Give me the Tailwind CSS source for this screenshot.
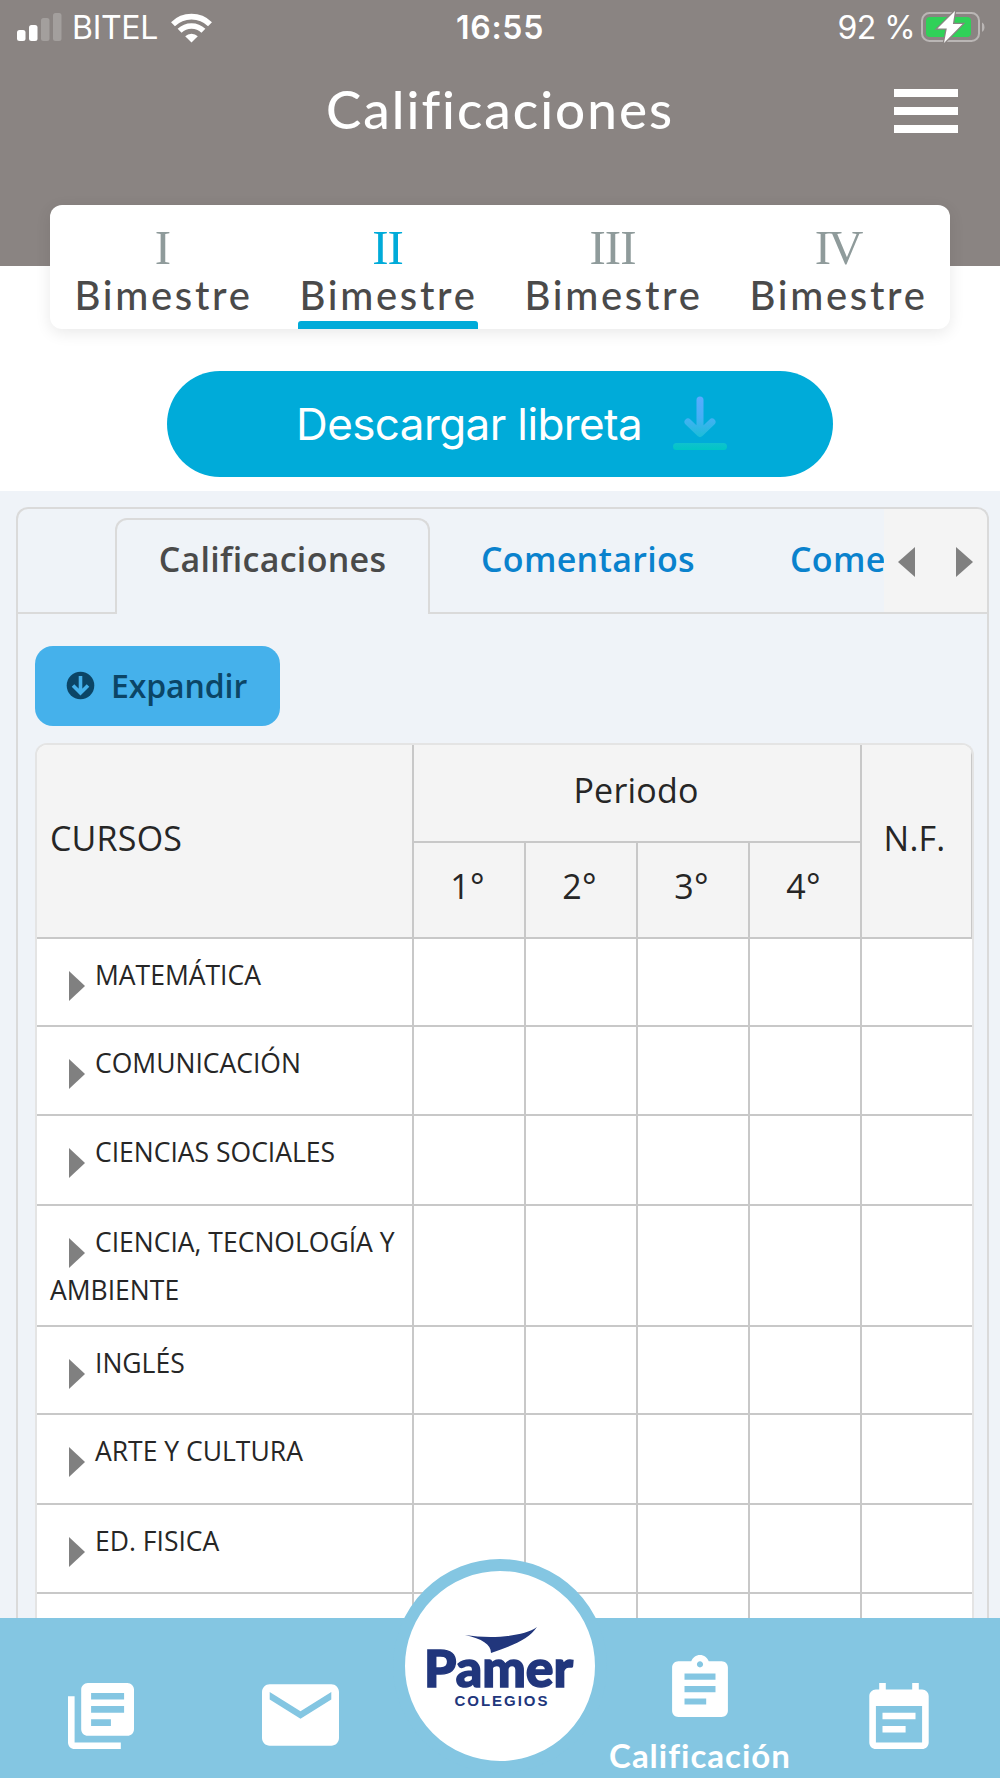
<!DOCTYPE html>
<html lang="es">
<head>
  <meta charset="UTF-8" />
  <title>Calificaciones</title>
  <meta name="viewport" content="width=device-width, initial-scale=1.0" />
  <script src="https://cdn.jsdelivr.net/npm/@tailwindcss/browser@4"></script>
</head>
<body class="bg-white">
  <div id="app" class="relative flex flex-col w-[1000px] h-[1778px] overflow-hidden font-['Open_Sans','Noto_Sans',sans-serif]">

    <header class="shrink-0 h-[266px] bg-[#8a8482] text-white">
      <!-- Status bar -->
      <div class="grid grid-cols-3 items-center h-[54px] pl-[17px] pr-[15px] font-['Inter',sans-serif]">
        <div class="flex items-center">
          <svg class="-mt-[2px] w-[45px] h-[28px]" viewBox="0 0 45 28" fill="#fff">
            <rect x="0" y="17" width="8.5" height="11" rx="2.5" />
            <rect x="12" y="12" width="8.5" height="16" rx="2.5" />
            <rect x="24" y="5" width="8.5" height="23" rx="2.5" opacity=".22" />
            <rect x="36" y="0" width="8.5" height="28" rx="2.5" opacity=".22" />
          </svg>
          <span class="ml-[10px] w-[86px] text-[32px] leading-[56px] tracking-[-0.3px]">BITEL</span>
          <svg class="ml-[13px] w-[41px] h-[30px]" viewBox="0 0 41 30">
            <g fill="none" stroke="#fff" stroke-width="5.6">
              <path d="M2 11.2a26.5 26.5 0 0 1 37 0" />
              <path d="M8.6 17.8a17 17 0 0 1 23.8 0" />
            </g>
            <path d="M20.5 29.5l-6.3-6.3a9 9 0 0 1 12.6 0z" fill="#fff" />
          </svg>
        </div>
        <span class="-ml-[2px] text-center text-[32px] leading-[56px] font-semibold tracking-[0.7px]">16:55</span>
        <div class="flex items-center justify-end">
          <span class="mr-[6px] text-[32px] leading-[56px] tracking-[-0.6px]">92 %</span>
          <svg class="-mt-[2px] w-[64px] h-[32px]" viewBox="0 0 64 32">
            <rect x="1" y="2" width="57" height="28" rx="7.5" fill="none" stroke="#bab6b5" stroke-width="2" />
            <path d="M61 11.5c3.3 1.5 3.3 7.8 0 9.3z" fill="#bab6b5" />
            <rect x="5" y="6" width="45" height="20" rx="4" fill="#30d158" />
            <path d="M34 0L16.5 17.5h9.3L23 32 41.5 13h-9.6z" fill="#fff" stroke="#8a8482" stroke-width="2.5" paint-order="stroke" />
          </svg>
        </div>
      </div>
      <!-- Title -->
      <div class="grid grid-cols-[1fr_auto_1fr] items-center h-[113px] px-[42px]">
        <span></span>
        <h1 class="pb-[3px] text-[53px] leading-[110px] font-['Lato',sans-serif] font-medium tracking-[2px]">Calificaciones</h1>
        <div class="flex flex-col gap-[10px] justify-self-end w-[64px]">
          <span class="h-2 bg-white"></span>
          <span class="h-2 bg-white"></span>
          <span class="h-2 bg-white"></span>
        </div>
      </div>
    </header>

    <!-- Period selector -->
    <nav class="shrink-0 grid grid-cols-4 w-[900px] h-[124px] -mt-[61px] ml-[50px] rounded-xl bg-white shadow-[0_4px_16px_rgba(0,0,0,0.09)] text-center text-[#4a4a4a]">
      <div class="flex flex-col items-center pt-[16px]">
        <span class="h-[50px] text-[49px] leading-[54px] tracking-[-1px] font-['Liberation_Serif',serif] text-[#8f9b9b]">I</span>
        <span class="h-[50px] pl-[2px] text-[40px] leading-[48px] tracking-[2.7px] font-['Lato',sans-serif] font-medium">Bimestre</span>
      </div>
      <div class="flex flex-col items-center pt-[16px]">
        <span class="h-[50px] text-[49px] leading-[54px] tracking-[-1px] font-['Liberation_Serif',serif] text-[#00abd9]">II</span>
        <span class="h-[50px] pl-[2px] text-[40px] leading-[48px] tracking-[2.7px] font-['Lato',sans-serif] font-medium">Bimestre</span>
        <span class="w-[180px] h-2 rounded-t-[3px] bg-[#00abd9]"></span>
      </div>
      <div class="flex flex-col items-center pt-[16px]">
        <span class="h-[50px] text-[49px] leading-[54px] tracking-[-1px] font-['Liberation_Serif',serif] text-[#8f9b9b]">III</span>
        <span class="h-[50px] pl-[2px] text-[40px] leading-[48px] tracking-[2.7px] font-['Lato',sans-serif] font-medium">Bimestre</span>
      </div>
      <div class="flex flex-col items-center pt-[16px]">
        <span class="h-[50px] text-[49px] leading-[54px] tracking-[-3px] font-['Liberation_Serif',serif] text-[#8f9b9b]">IV</span>
        <span class="h-[50px] pl-[2px] text-[40px] leading-[48px] tracking-[2.7px] font-['Lato',sans-serif] font-medium">Bimestre</span>
      </div>
    </nav>

    <button class="shrink-0 flex items-center w-[666px] h-[106px] mt-[42px] mb-[14px] ml-[167px] pl-[129px] rounded-full bg-[#00abd9] text-white font-['Inter',sans-serif]">
      <span class="w-[377px] text-left text-[44px] leading-[106px] tracking-[-0.6px] whitespace-nowrap">Descargar libreta</span>
      <svg class="-mt-[2px] w-[54px] h-[54px]" viewBox="0 0 54 54" fill="none" stroke="url(#down)" stroke-width="7" stroke-linecap="round" stroke-linejoin="round">
        <defs>
          <linearGradient id="down" gradientUnits="userSpaceOnUse" x1="0" y1="0" x2="0" y2="54">
            <stop offset="0" stop-color="#5aaaff" />
            <stop offset=".4" stop-color="#45b0f5" />
            <stop offset="1" stop-color="#00c6c4" />
          </linearGradient>
        </defs>
        <path d="M27 4v33M15 26l12 11.5L39 26M3.5 50.5h47" />
      </svg>
    </button>

    <main class="grow flex flex-col pt-[16px] pr-[11px] pl-[16px] bg-[#eff3f8]">
      <div class="grow flex flex-col border-2 border-b-0 border-[#dadada] rounded-t-xl overflow-hidden">
        <!-- Tabs -->
        <div class="shrink-0 flex h-[105px] border-b-2 border-[#dadada] text-[34px] font-semibold tracking-[0.3px] text-[#0a82cd]">
          <div class="flex w-[866px] overflow-hidden pt-[9px] -mb-[2px] whitespace-nowrap">
            <div class="shrink-0 w-[315px] h-[96px] ml-[97px] border-2 border-b-0 border-[#dadada] rounded-t-xl bg-[#eff3f8] text-[#4a4a4a] text-center leading-[78px]">Calificaciones</div>
            <div class="shrink-0 ml-[51px] w-[309px] leading-[82px]">Comentarios</div>
            <div class="shrink-0 leading-[82px]">Comentarios</div>
          </div>
          <div class="grow flex items-center justify-between px-[14px] pt-[2px] bg-[#f4f4f4]">
            <svg class="w-[17px] h-[30px]" viewBox="0 0 17 30" fill="#808080"><path d="M17 0v30L0 15z" /></svg>
            <svg class="w-[17px] h-[30px]" viewBox="0 0 17 30" fill="#808080"><path d="M0 0v30l17-15z" /></svg>
          </div>
        </div>

        <button class="shrink-0 flex items-center w-[245px] h-[80px] mt-[32px] mb-[17px] ml-[17px] pl-[31px] rounded-[18px] bg-[#45b1eb] text-[#0b4566]">
          <svg class="-mt-[2px] w-[29px] h-[29px]" viewBox="0 0 29 29">
            <circle cx="14.5" cy="14.5" r="13.8" fill="#0b4566" />
            <path d="M14.5 5v17M7 14.5l7.5 7.5 7.5-7.5" fill="none" stroke="#45b1eb" stroke-width="3.6" />
          </svg>
          <span class="ml-[16px] text-[32px] leading-[78px] font-semibold tracking-[-0.1px]">Expandir</span>
        </button>

        <!-- Grades table -->
        <div class="grow w-[939px] h-0 ml-[17px] border-2 border-b-0 border-[#e4e4e4] rounded-t-xl bg-white overflow-hidden text-[#262626]">
          <table class="table-fixed border-separate border-spacing-0 w-[936px] [&_th]:border-r-2 [&_th]:border-b-2 [&_td]:border-r-2 [&_td]:border-b-2 [&_th]:border-[#c8c8c8] [&_td]:border-[#c8c8c8] [&_th]:p-0 [&_td]:p-0 [&_th]:font-normal [&_td]:last:border-r-0">
            <colgroup>
              <col class="w-[377px]" />
              <col class="w-[112px]" />
              <col class="w-[112px]" />
              <col class="w-[112px]" />
              <col class="w-[112px]" />
              <col class="w-[111px]" />
            </colgroup>
            <thead class="bg-[#f4f4f4] text-[34px] leading-[46px] tracking-[0.2px]">
              <tr class="h-[98px]">
                <th rowspan="2" class="text-left"><div class="pl-[13px] pb-[7px]">CURSOS</div></th>
                <th colspan="4"><div class="pr-[2px] pb-[7px]">Periodo</div></th>
                <th rowspan="2"><div class="pr-[4px] pb-[7px]">N.F.</div></th>
              </tr>
              <tr class="h-[96px]">
                <th><div class="pr-[3px] pb-[9px]">1°</div></th>
                <th><div class="pr-[3px] pb-[9px]">2°</div></th>
                <th><div class="pr-[3px] pb-[9px]">3°</div></th>
                <th><div class="pr-[3px] pb-[9px]">4°</div></th>
              </tr>
            </thead>
            <tbody id="courses" class="text-[26.5px] leading-[48px]"></tbody>
          </table>
        </div>
      </div>
    </main>

    <!-- Bottom navigation -->
    <footer class="shrink-0 flex h-[160px] pl-[68px] bg-[#84c6e2] text-white">
      <svg class="mt-[65px] w-[66px] h-[66px]" viewBox="2 2 20 20" fill="currentColor">
        <path d="M4 6H2v14c0 1.1.9 2 2 2h14v-2H4V6zM20 2H8c-1.1 0-2 .9-2 2v12c0 1.1.9 2 2 2h12c1.1 0 2-.9 2-2V4c0-1.1-.9-2-2-2zm-5 13H9v-2h6v2zm4-4H9V9h10v2zm0-4H9V5h10v2z" />
      </svg>
      <svg class="mt-[66px] ml-[128px] w-[77px] h-[62px]" viewBox="2 4 20 16" fill="currentColor">
        <path d="M20 4H4c-1.1 0-2 .9-2 2v12c0 1.1.9 2 2 2h16c1.1 0 2-.9 2-2V6c0-1.1-.9-2-2-2zm0 4l-8 5-8-5V6l8 5 8-5v2z" />
      </svg>
      <div class="flex flex-col items-center ml-[266px] w-[190px] pt-[37px]">
        <svg class="w-[56px] h-[62px]" viewBox="3 1 18 20" fill="currentColor">
          <path d="M19 3h-4.18C14.4 1.84 13.3 1 12 1s-2.4.84-2.82 2H5c-1.1 0-2 .9-2 2v14c0 1.1.9 2 2 2h14c1.1 0 2-.9 2-2V5c0-1.1-.9-2-2-2zm-7 0c.55 0 1 .45 1 1s-.45 1-1 1-1-.45-1-1 .45-1 1-1zm2 14H7v-2h7v2zm3-4H7v-2h10v2zm0-4H7V7h10v2z" />
        </svg>
        <span class="mt-[18px] text-[33px] leading-[40px] tracking-[1px] font-['Lato',sans-serif] font-bold">Calificación</span>
      </div>
      <svg class="mt-[65px] ml-[74px] w-[60px] h-[66px]" viewBox="3 1 18 20" fill="currentColor">
        <path d="M17 10H7v2h10v-2zm2-7h-1V1h-2v2H8V1H6v2H5c-1.11 0-2 .9-2 2v14c0 1.1.89 2 2 2h14c1.1 0 2-.9 2-2V5c0-1.1-.9-2-2-2zm0 16H5V8h14v11zm-5-5H7v2h7v-2z" />
      </svg>
    </footer>

    <!-- School logo over the bar -->
    <div class="absolute left-[393px] top-[1559px] w-[214px] h-[214px] rounded-full border-[12px] border-[#84c6e2] bg-white">
      <svg class="w-[190px] h-[190px]" viewBox="405 1571 190 190" fill="#21367c">
        <path d="M465 1635c25 4 58 2 72-8-8 12-25 19-46 26 0-9-9-14-26-18z" />
        <text x="424" y="1686.5" font-family="Lato" font-weight="900" font-size="52" stroke="#21367c" stroke-width="1.5" textLength="149" lengthAdjust="spacingAndGlyphs">Pamer</text>
        <text x="454.5" y="1705.5" font-family="Liberation Sans" font-weight="700" font-size="15" textLength="93">COLEGIOS</text>
      </svg>
    </div>
  </div>

  <script>
    const courses = [
      ["MATEMÁTICA", 88],
      ["COMUNICACIÓN", 89],
      ["CIENCIAS SOCIALES", 90],
      ["CIENCIA, TECNOLOGÍA Y AMBIENTE", 121],
      ["INGLÉS", 88],
      ["ARTE Y CULTURA", 90],
      ["ED. FISICA", 89],
      ["", 89],
    ];
    document.getElementById("courses").innerHTML = courses.map(([name, height]) => `
      <tr style="height: ${height}px">
        <td class="align-top">
          <div class="pl-[13px] pt-[12px]">
            ${name && '<svg class="inline-block align-top mt-[20px] -mb-[10px] ml-[18.5px] mr-[10.5px] w-[16px] h-[30px]" viewBox="0 0 16 30" fill="#808080"><path d="M0 0v30l16-15z" /></svg>'}${name}
          </div>
        </td>
        <td></td><td></td><td></td><td></td><td></td>
      </tr>`).join("");
  </script>
</body>
</html>
